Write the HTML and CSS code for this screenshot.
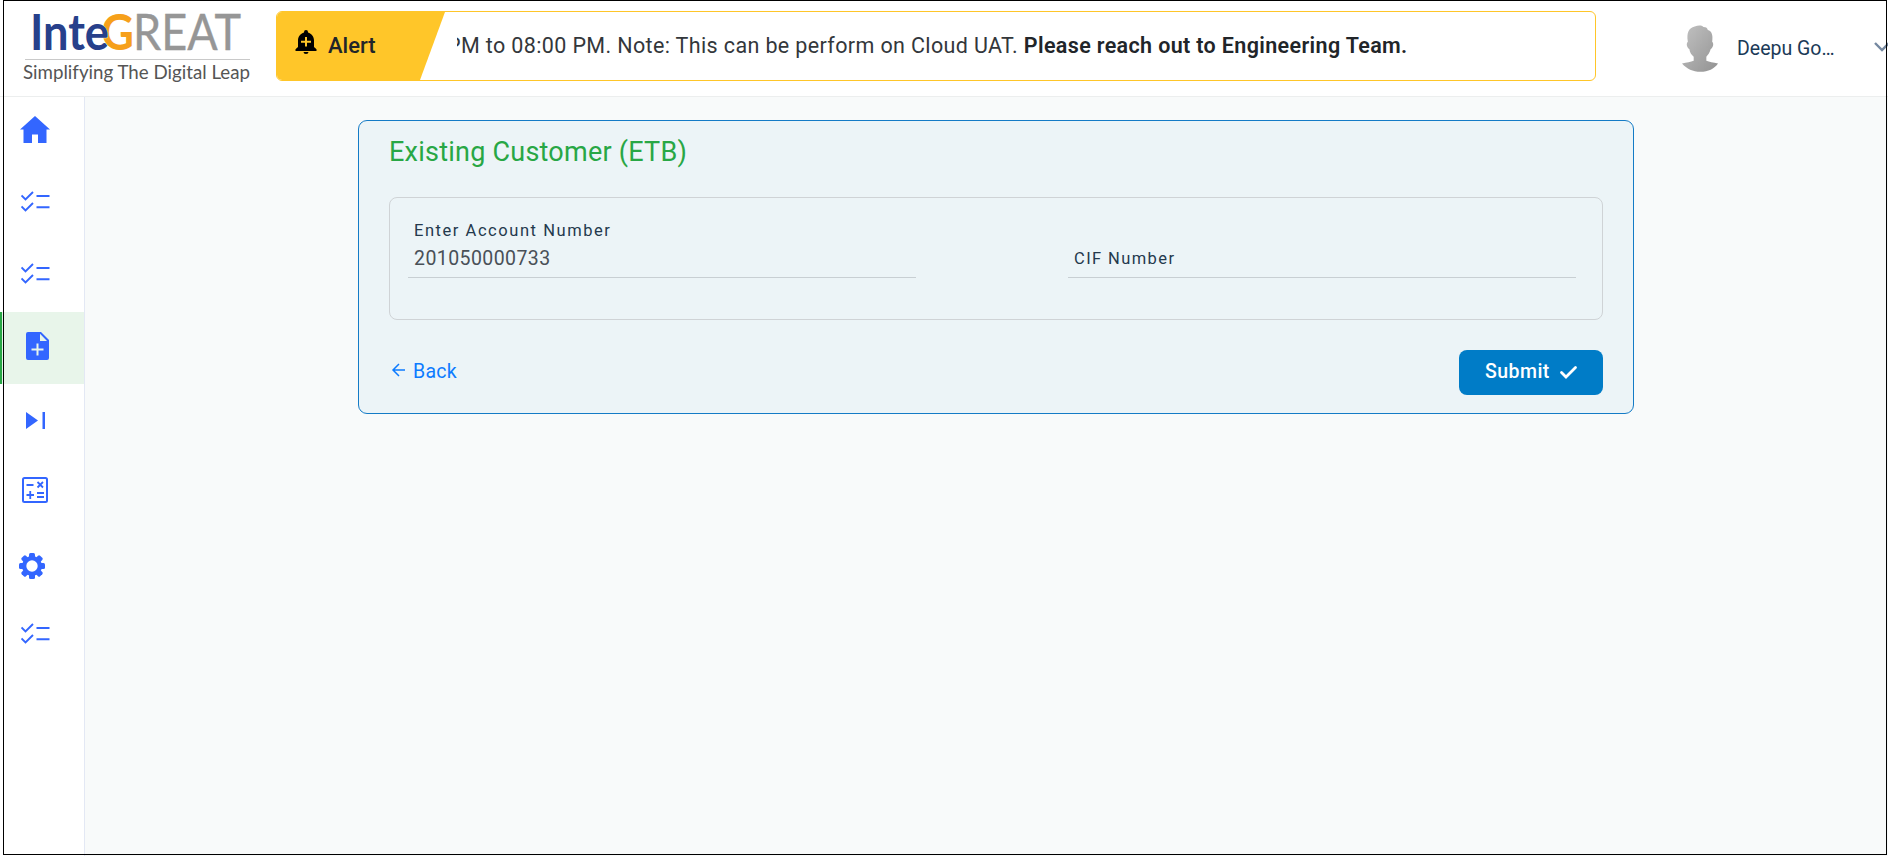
FILE: index.html
```html
<!DOCTYPE html>
<html lang="en">
<head>
<meta charset="utf-8">
<title>InteGREAT</title>
<link rel="stylesheet" href="styles.css">
</head>
<body>
<svg class="defs" width="0" height="0" aria-hidden="true">
  <symbol id="checks" viewBox="0 0 30 22"><path d="M.5 5.500 4.500 9.500 12 2M.5 16.500 4.500 20.500 12 13" fill="none" stroke="currentColor" stroke-width="1.900"/><path d="M15.500 5H28.500v2H15.500zM15.500 16.300H28.500v2H15.500z" fill="currentColor"/></symbol>
</svg>
<div class="app">
  <header class="header">
    <svg class="logo" viewBox="0 0 260 92">
      <g class="logo-word">
        <text class="gray" x="133" y="50" textLength="108" lengthAdjust="spacingAndGlyphs">REAT</text>
        <text class="orange" x="101" y="50" textLength="33" lengthAdjust="spacingAndGlyphs">G</text>
        <text class="navy" x="30" y="50" textLength="79" lengthAdjust="spacingAndGlyphs">Inte</text>
      </g>
      <path d="M25 59.500H250" stroke="#c9c9c9"/>
      <text class="tagline" x="23" y="79" textLength="227" lengthAdjust="spacingAndGlyphs">Simplifying The Digital Leap</text>
    </svg>
    <div class="alert">
      <div class="alert-tag">
        <svg class="bell" viewBox="0 0 22 24"><path fill="currentColor" fill-rule="evenodd" d="M11 0a2 2 0 0 1 2 2v.4c3.600 1 6 4.200 6 8V17l2.500 2.300V21H.5v-1.700L3 17v-6.600c0-3.800 2.400-7 6-8V2a2 2 0 0 1 2-2zM10 7v3.800H6v2h4v3.800h2v-3.800h4v-2h-4V7zM8.500 22h5a2.500 2 0 0 1-5 0z"/></svg>
        <span>Alert</span>
      </div>
      <div class="ticker"><p>PM to 08:00 PM. Note: This can be perform on Cloud UAT. <b>Please reach out to Engineering Team.</b></p></div>
    </div>
    <div class="user">
      <svg class="avatar" viewBox="0 0 38 48">
        <defs><linearGradient id="shade" x1="0" y1="0" x2="1" y2="1"><stop offset="0" stop-color="#c2c2c2"/><stop offset="1" stop-color="#929292"/></linearGradient></defs>
        <path fill="url(#shade)" d="M6 17C4.500 8 7 3 13 1.500c4-1.500 7-1.500 9 .5 3 0 4 1 4.500 3 4 1 5.500 5 4.500 12 2 2 1 6-1.500 7.500-1 4-3 6-4.500 8v4c3 1.500 7 1.500 12 3C33 45 27 48 19 48S5 45 0 39.500c5-1.500 9-1.500 12-3v-4c-2-2-4-4-4.500-8C5 23 4 19 6 17z"/>
      </svg>
      <span class="user-name">Deepu Go…</span>
      <svg class="chevron" viewBox="0 0 16 10"><path d="M1 1l7 7 7-7" fill="none" stroke="#7588a0" stroke-width="2.400"/></svg>
    </div>
  </header>
  <div class="body">
    <nav class="sidebar">
      <a class="item"><svg class="home" viewBox="0 0 30 27"><path fill="currentColor" d="M15 0 30 13.500h-3.500V27H18v-8.500h-6V27H3.500V13.500H0z"/></svg></a>
      <a class="item"><svg class="list"><use href="#checks"/></svg></a>
      <a class="item"><svg class="list"><use href="#checks"/></svg></a>
      <a class="item active"><svg class="doc" viewBox="0 0 23 28"><path fill="currentColor" fill-rule="evenodd" d="M2 0h13l8 8v18a2 2 0 0 1-2 2H2a2 2 0 0 1-2-2V2a2 2 0 0 1 2-2zM14 1.800V9h7zM10.500 11.500V16.500H5.500v2h5v5h2v-5h5v-2h-5v-5z"/></svg></a>
      <a class="item"><svg class="skip" viewBox="0 0 19 17"><path fill="currentColor" d="M0 0l12 8.500L0 17zM16.500 0H19v17h-2.500z"/></svg></a>
      <a class="item"><svg class="calc" viewBox="0 0 26 26"><rect x="1" y="1" width="24" height="24" rx="1.500" fill="none" stroke="currentColor" stroke-width="2"/><path d="M4.500 8H11.500M4.500 18H12M8.250 14V22M15 16H22M15 20H22M15.500 5l5.500 5.500M21 5l-5.500 5.500" fill="none" stroke="currentColor" stroke-width="1.800"/></svg></a>
      <a class="item"><svg class="gear" viewBox="-13 -13 26 26"><g fill="currentColor"><g id="teeth"><rect x="-3" y="-13" width="6" height="26" rx="1.500"/><rect x="-13" y="-3" width="26" height="6" rx="1.500"/></g><use href="#teeth" transform="rotate(45)"/><circle r="10"/></g><circle r="5.700" fill="#fff"/></svg></a>
      <a class="item"><svg class="list"><use href="#checks"/></svg></a>
    </nav>
    <main class="content">
      <section class="card">
        <h1>Existing Customer (ETB)</h1>
        <div class="fields">
          <div class="field"><label>Enter Account Number</label><span class="value">201050000733</span></div>
          <div class="field"><label class="resting">CIF Number</label></div>
        </div>
        <div class="actions">
          <a class="back"><svg viewBox="0 0 13 14"><path d="M7 1 1 7l6 6M1.500 7H13" fill="none" stroke="currentColor" stroke-width="1.500"/></svg><span>Back</span></a>
          <button class="submit"><span>Submit</span><svg viewBox="0 0 17 13"><path d="M1.500 6.500l4.500 4.500L15.500 1.500" fill="none" stroke="currentColor" stroke-width="2.800" stroke-linecap="round"/></svg></button>
        </div>
      </section>
    </main>
  </div>
  <div class="frame"></div>
</div>
</body>
</html>
```
FILE: styles.css
```css
* { box-sizing: border-box; }
body { margin: 0; background: #fff; font-family: Roboto, "Liberation Sans", sans-serif; color: #212529; }
svg { display: block; flex: none; overflow: visible; }
h1, p { margin: 0; font-weight: 400; }
.defs { position: absolute; }
.app { position: relative; width: 1888px; height: 856px; overflow: hidden; display: flex; flex-direction: column; }
.frame { position: absolute; top: 0; left: 3px; width: 1884px; height: 855px; border: 1px solid #000; pointer-events: none; }

.header { height: 97px; flex: none; display: flex; border-bottom: 1px solid #eceeee; }
.logo { width: 260px; height: 92px; margin-right: 16px; }
.logo text { font-family: Lato, "Open Sans", sans-serif; }
.logo-word { font-size: 50px; font-weight: 400; }
.logo .navy { fill: #27408b; font-weight: 700; stroke: #fff; stroke-width: 1px; paint-order: stroke; }
.logo .orange { fill: #f6a01a; font-weight: 700; }
.logo .gray { fill: #969696; stroke: #969696; stroke-width: 0.4px; }
.logo .tagline { font-size: 18.500px; fill: #555; }

.alert { width: 1320px; flex: none; height: 70px; margin-top: 11px; display: flex; border: 1px solid #ffc629; border-radius: 6px; overflow: hidden; }
.alert-tag { width: 168px; flex: none; height: 68px; padding: 18px 0 0 18px; background: #ffc629; clip-path: polygon(0 0, 100% 0, 143px 100%, 0 100%); display: flex; gap: 11px; font-size: 22px; line-height: 32px; font-weight: 500; }
.bell { width: 22px; height: 24px; color: #000; }
.ticker { width: 1110px; margin-left: 12px; padding-top: 19px; overflow: hidden; }
.ticker p { margin-left: -10px; white-space: nowrap; font-size: 21.500px; line-height: 30px; letter-spacing: 0.370px; color: #33373b; }
.ticker b { font-weight: 600; letter-spacing: 0.360px; color: #212529; }

.user { display: flex; margin-left: 86px; }
.avatar { width: 37px; height: 47px; margin-top: 25px; }
.user-name { margin: 35px 38px 0 18px; width: 99px; white-space: nowrap; font-size: 19.500px; line-height: 27px; color: #1b3a57; }
.chevron { width: 16px; height: 10px; margin-top: 42px; }

.body { flex: 1; display: flex; }
.sidebar { width: 85px; border-right: 1px solid #e3e8f4; }
.item { height: 72px; display: flex; color: #3366ff; }
.item:first-child { height: 71px; }
.active { background: #e8f5ea; border-left: 2px solid #28a745; }
.home { width: 30px; height: 27px; margin: 19px 0 0 20px; }
.list { width: 30px; height: 22px; margin: 22px 0 0 21px; }
.doc { width: 23px; height: 28px; margin: 20px 0 0 24px; }
.skip { width: 19px; height: 17px; margin: 28px 0 0 26px; }
.calc { width: 26px; height: 26px; margin: 21px 0 0 22px; }
.gear { width: 26px; height: 26px; margin: 25px 0 0 19px; }

.content { flex: 1; padding: 23px 0 0 273px; background: #f8fafa; }
.card { width: 1276px; height: 294px; padding: 14px 30px 0; border: 1px solid #147bc6; border-radius: 9px; background: #ecf4f7; }
h1 { height: 62px; font-size: 27px; line-height: 34px; color: #28a745; letter-spacing: 0.230px; white-space: nowrap; }
.fields { height: 123px; padding: 22px 26px 0 18px; display: flex; justify-content: space-between; border: 1px solid #cfd3d6; border-radius: 8px; }
.field { width: 508px; height: 58px; padding-left: 6px; border-bottom: 1px solid #c8cfd3; display: flex; flex-direction: column; }
label { font-size: 16.500px; line-height: 22px; letter-spacing: 1.550px; color: #24394d; white-space: nowrap; }
.resting { padding-top: 28px; letter-spacing: 1.400px; }
.value { padding-top: 5px; font-size: 19.500px; line-height: 24px; letter-spacing: 0.420px; color: #495057; }
.actions { margin-top: 30px; display: flex; justify-content: space-between; }
.back { display: flex; gap: 8px; padding: 9px 0 0 3px; color: #0d7bff; font-size: 19.500px; line-height: 26px; letter-spacing: 0.300px; }
.back svg { width: 13px; height: 14px; margin-top: 4px; }
.submit { width: 144px; height: 45px; padding: 9px 0 0 26px; border: 0; border-radius: 8px; background: #007cc7; color: #fff; display: flex; gap: 10px; font: 500 19.500px/26px Roboto, sans-serif; letter-spacing: 0.450px; }
.submit svg { width: 17px; height: 13px; margin-top: 7px; }
```
